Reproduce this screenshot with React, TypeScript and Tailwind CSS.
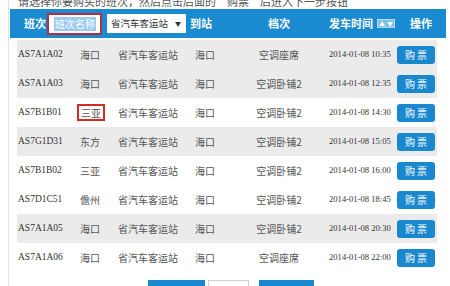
import React from "react";

type Row = { code: string; from: string; to: string; cls: string; time: string; grey: boolean; mark?: boolean };

const rows: Row[] = [
  { code: "AS7A1A02", from: "海口", to: "海口", cls: "空调座席", time: "2014-01-08 10:35", grey: true },
  { code: "AS7A1A03", from: "海口", to: "海口", cls: "空调卧铺2", time: "2014-01-08 12:35", grey: true },
  { code: "AS7B1B01", from: "三亚", to: "海口", cls: "空调卧铺2", time: "2014-01-08 14:30", grey: false, mark: true },
  { code: "AS7G1D31", from: "东方", to: "海口", cls: "空调卧铺2", time: "2014-01-08 15:05", grey: true },
  { code: "AS7B1B02", from: "三亚", to: "海口", cls: "空调卧铺2", time: "2014-01-08 16:00", grey: false },
  { code: "AS7D1C51", from: "儋州", to: "海口", cls: "空调卧铺2", time: "2014-01-08 18:45", grey: false },
  { code: "AS7A1A05", from: "海口", to: "海口", cls: "空调卧铺2", time: "2014-01-08 20:30", grey: true },
  { code: "AS7A1A06", from: "海口", to: "海口", cls: "空调座席", time: "2014-01-08 22:00", grey: false },
];

export default function App() {
  return (
    <div className="w-[450px] h-[286px] overflow-hidden bg-white font-['Noto_Sans_CJK_SC',sans-serif]">
      <div className="ml-[8px] min-h-[320px] border-l border-[#e3e3e3] flex flex-col">
        <div className="shrink-0 h-[9px] overflow-hidden">
          <div className="-mt-[6px] pl-[9px] text-[11px] leading-[14px] text-[#555] whitespace-nowrap">
            请选择你要购买的班次，然后点击后面的“购票”后进入下一步按钮
          </div>
        </div>
        <div className="shrink-0 ml-[1px] w-[436px] h-[29px] bg-[#1a8bd1] flex items-center text-white text-[11px] font-bold whitespace-nowrap">
          <div className="w-[37px] pl-[14px]">班次</div>
          <div className="w-[55px] h-[22px] border-2 border-[#b5303c] bg-white flex items-center pl-[5px]">
            <span className="bg-[#9ccaf0] text-white font-normal text-[10px] leading-[14px] px-[1px]">班次名称</span>
          </div>
          <div className="w-[5px]" />
          <div className="w-[79px] h-[19px] bg-white flex items-center pl-[4px] pr-[5px] text-[#333] font-normal text-[9.5px]">
            <span className="flex-1">省汽车客运站</span>
            <span className="text-[6px] leading-none">▼</span>
          </div>
          <div className="w-[82px] pl-[4px]">到站</div>
          <div className="w-[61px]">档次</div>
          <div className="w-[81px] flex items-center">
            <span>发车时间</span>
            <span className="ml-[4px] w-[18px] h-[9px] bg-[#7dbde9] flex items-center justify-around text-[6px] leading-none text-white border border-[#b8dbf3]">
              <span>▲</span>
              <span>▼</span>
            </span>
          </div>
          <div>操作</div>
        </div>
        <div className="shrink-0 mt-[2px] ml-[8px] w-[420px] flex flex-col text-[#555]">
          {rows.map((r) => (
            <div
              key={r.code}
              className={`shrink-0 h-[29px] flex items-center whitespace-nowrap ${r.grey ? "bg-[#ebebeb]" : "bg-white"}`}
            >
              <div className="w-[63px] pl-[1px] font-['Liberation_Serif',serif] text-[9.5px] text-[#333]">{r.code}</div>
              <div className="w-[38px] text-[10px]">
                {r.mark ? (
                  <span className="-ml-[3px] inline-block border-2 border-[#d42a2a] px-[2px] leading-[13px]">{r.from}</span>
                ) : (
                  r.from
                )}
              </div>
              <div className="w-[77px] text-[10px]">省汽车客运站</div>
              <div className="w-[35px] text-[10px]">{r.to}</div>
              <div className="w-[98px] text-[10px] text-center">{r.cls}</div>
              <div className="w-[69px] pl-[1px] font-['Liberation_Serif',serif] text-[8.6px] text-[#333]">{r.time}</div>
              <div className="w-[38px] h-[18px] bg-[#1a88cf] rounded-[3px] flex items-center justify-center text-white text-[10px]">
                购 票
              </div>
            </div>
          ))}
        </div>
        <div className="shrink-0 mt-[8px] ml-[139px] flex items-start">
          <div className="w-[57px] h-[22px] bg-[#1a88cf] flex items-center justify-center text-white text-[10px]">上一页</div>
          <div className="ml-[3px] w-[41px] h-[22px] border border-[#cfcfcf] flex items-center justify-center text-[10px] text-[#333]">1/1</div>
          <div className="ml-[10px] w-[55px] h-[22px] bg-[#1a88cf] flex items-center justify-center text-white text-[10px]">下一页</div>
        </div>
      </div>
    </div>
  );
}
